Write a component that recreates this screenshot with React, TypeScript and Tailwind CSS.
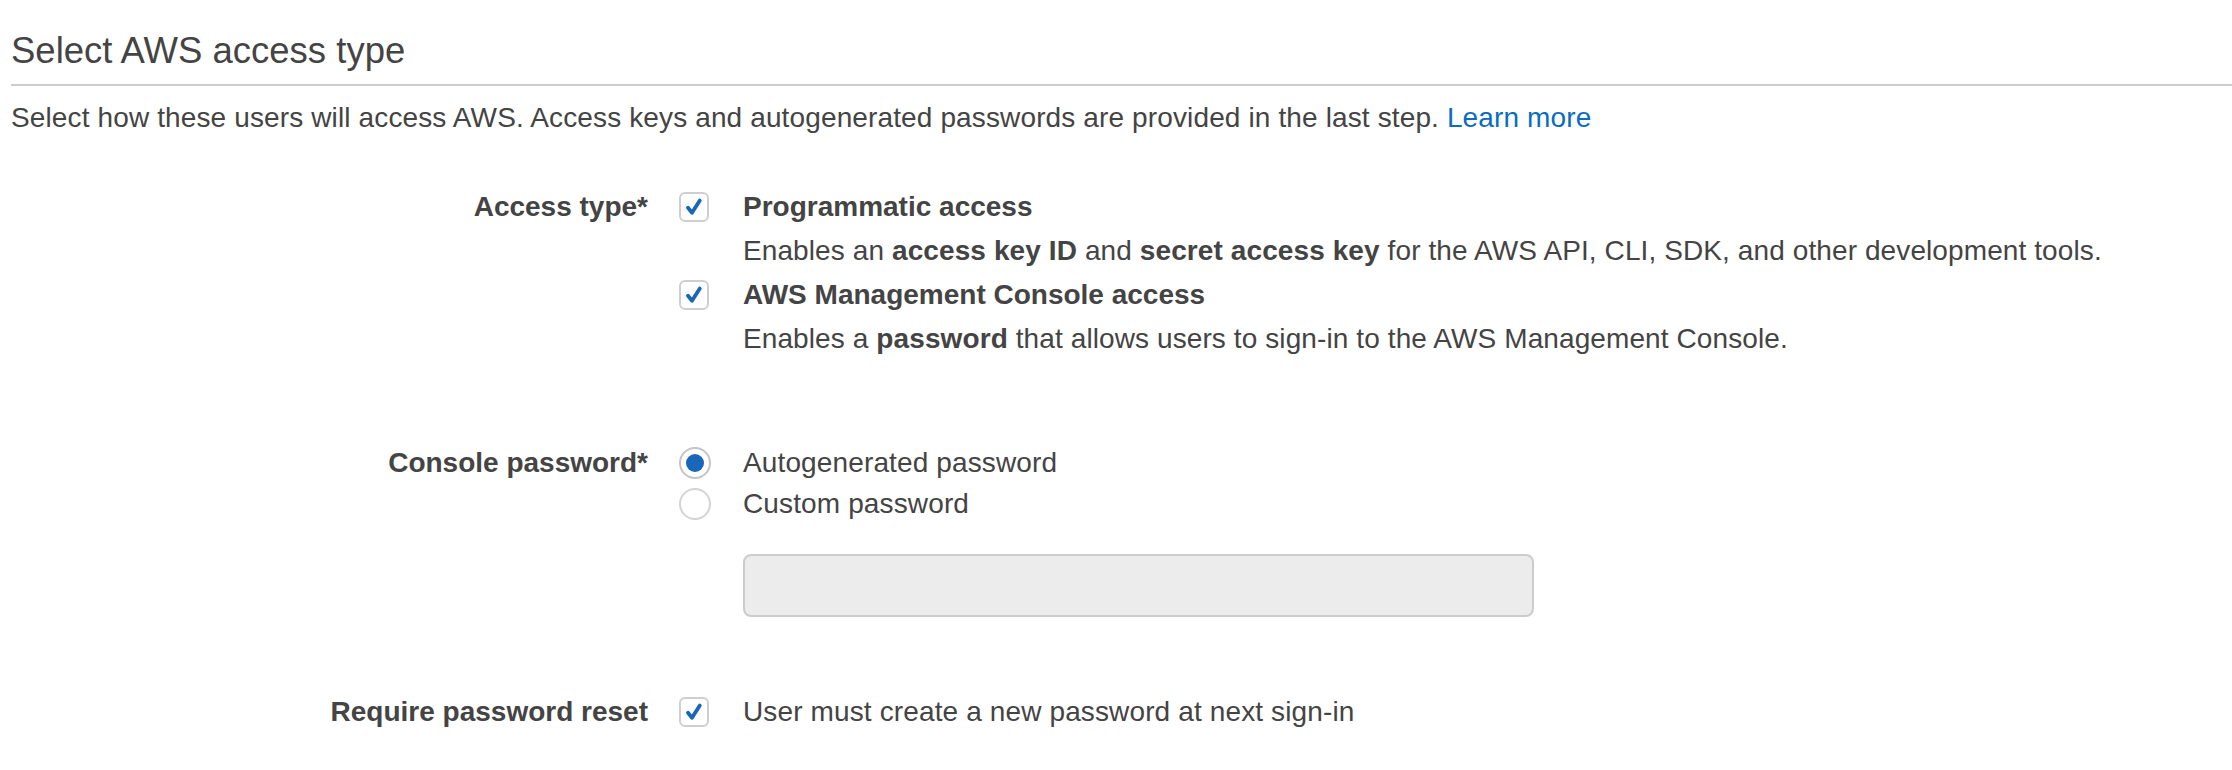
import React from "react";

function Check() {
  return (
    <span className="flex h-[30px] w-[30px] shrink-0 items-center justify-center rounded-[6px] border-2 border-[#cfcfcf] bg-white">
      <svg width="22" height="22" viewBox="0 0 22 22">
        <path d="M5 11.8 L9 16.8 L16.8 4.6" fill="none" stroke="#1a66b8" strokeWidth="3.8" strokeLinecap="round" strokeLinejoin="round" />
      </svg>
    </span>
  );
}

function Radio({ on }: { on?: boolean }) {
  return (
    <span className={"flex h-[32px] w-[32px] shrink-0 items-center justify-center rounded-full border-2 bg-white " + (on ? "border-[#c4c4c4]" : "border-[#d4d4d4]")}>
      {on ? <span className="h-[18px] w-[18px] rounded-full bg-[#1a66b8]" /> : null}
    </span>
  );
}

export default function App() {
  return (
    <div className="h-[770px] w-[2232px] overflow-hidden bg-white font-['Liberation_Sans',Arial,sans-serif] text-[#444]">
      <div className="pl-[11px] pt-[29px]">
        <h2 className="text-[36.5px] leading-[44px] font-normal">Select AWS access type</h2>
        <div className="mt-[11px] border-b-2 border-[#cccccc]" />
        <p className="mt-[12px] text-[28px] leading-[40px] tracking-[0.13px]">
          Select how these users will access AWS. Access keys and autogenerated passwords are provided in the last step.{" "}
          <a className="text-[#0a6cc0]">Learn more</a>
        </p>
      </div>

      <div className="mt-[47px] flex flex-col text-[28px]">
        {/* Access type */}
        <div className="flex">
          <div className="w-[648px] text-right font-bold leading-[44px]">Access type*</div>
          <div className="flex flex-col pl-[31px]">
            <div className="flex h-[44px] items-center gap-[34px]">
              <Check />
              <span className="font-bold">Programmatic access</span>
            </div>
            <div className="flex h-[44px] items-center pl-[64px] tracking-[0.1px]">
              <span>
                Enables an <b>access key ID</b> and <b>secret access key</b> for the AWS API, CLI, SDK, and other development tools.
              </span>
            </div>
            <div className="flex h-[44px] items-center gap-[34px]">
              <Check />
              <span className="font-bold">AWS Management Console access</span>
            </div>
            <div className="flex h-[44px] items-center pl-[64px] tracking-[0.1px]">
              <span>
                Enables a <b>password</b> that allows users to sign-in to the AWS Management Console.
              </span>
            </div>
          </div>
        </div>

        {/* Console password */}
        <div className="mt-[82px] flex">
          <div className="w-[648px] text-right font-bold leading-[40px]">Console password*</div>
          <div className="flex flex-col pl-[31px] tracking-[0.13px]">
            <div className="flex h-[40px] items-center gap-[32px]">
              <Radio on />
              <span>Autogenerated password</span>
            </div>
            <div className="flex h-[41px] items-center gap-[32px]">
              <Radio />
              <span>Custom password</span>
            </div>
            <div className="ml-[64px] mt-[30px] h-[63px] w-[791px] rounded-[8px] border-2 border-[#cccccc] bg-[#ececec]" />
          </div>
        </div>

        {/* Require password reset */}
        <div className="mt-[73px] flex">
          <div className="w-[648px] text-right font-bold leading-[44px]">Require password reset</div>
          <div className="flex flex-col pl-[31px]">
            <div className="flex h-[44px] items-center gap-[34px] tracking-[0.13px]">
              <Check />
              <span>User must create a new password at next sign-in</span>
            </div>
          </div>
        </div>
      </div>
    </div>
  );
}
